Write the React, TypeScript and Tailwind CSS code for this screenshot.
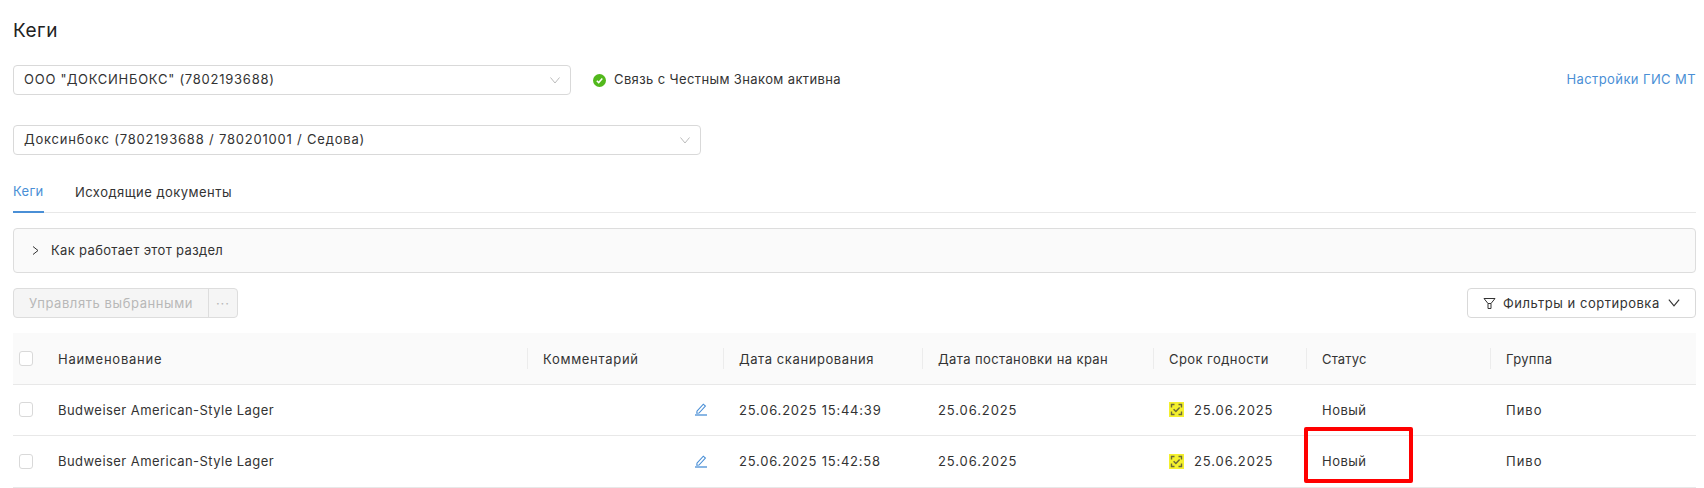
import React from 'react'

const columns = [
  { label: 'Наименование', width: 'w-[483px]', tracking: 'tracking-[0.74px]' },
  { label: 'Комментарий', width: 'w-[196px]', tracking: 'tracking-[0.7px]' },
  { label: 'Дата сканирования', width: 'w-[199px]', tracking: 'tracking-[0.58px]' },
  { label: 'Дата постановки на кран', width: 'w-[231px]', tracking: 'tracking-[0.39px]' },
  { label: 'Срок годности', width: 'w-[153px]', tracking: 'tracking-[0.43px]' },
  { label: 'Статус', width: 'w-[184px]', tracking: 'tracking-[0.15px]' },
  { label: 'Группа', width: 'w-[206px]', tracking: 'tracking-[0.35px]' },
]

const rows = [{ scanned: '25.06.2025 15:44:39' }, { scanned: '25.06.2025 15:42:58' }]

const Chevron = ({ className }: { className?: string }) => (
  <svg viewBox="0 0 10 7" fill="none" stroke="currentColor" strokeWidth="1" className={className}>
    <path d="M0.5 0.5 L5 6 L9.5 0.5" />
  </svg>
)

const Checkbox = () => <span className="block h-[15px] w-[14px] rounded-[3px] border border-[#d9d9d9] bg-white" />

const PencilIcon = () => (
  <svg viewBox="0 0 14 14" fill="none" stroke="#4a8fd6" strokeWidth="1.1" className="-mt-[3px] h-[14px] w-[14px]">
    <path d="M3 9.2 L9.3 2.2 L11.4 4.1 L5 11 L2.8 11.2 Z" />
    <path d="M1 13 H13" strokeWidth="1.3" />
  </svg>
)

const MarkIcon = () => (
  <svg viewBox="0 0 15 15" fill="none" className="-mt-[2px] h-[15px] w-[15px] shrink-0">
    <rect width="15" height="15" fill="#f4f02e" />
    <path d="M2.5 5.5 V2.5 H5.5 M9.5 2.5 H12.5 V5.5 M12.5 9.5 V12.5 H9.5 M5.5 12.5 H2.5 V9.5" stroke="#6a6a3a" strokeWidth="1.4" />
    <path d="M4.6 7.3 L6.9 9.5 L10.6 5.6" stroke="#6a6a3a" strokeWidth="1.5" />
  </svg>
)

export default function App() {
  return (
    <div className="relative h-[488px] w-[1704px] overflow-hidden bg-white pl-[13px] pr-[8px] font-['Inter',sans-serif] text-[13px] text-[#333]">
      <h1 className="flex h-[65px] items-center pb-[4px] text-[19px] font-normal leading-none tracking-[0.5px] text-[#222]">Кеги</h1>

      <div className="flex items-center">
        <div className="flex h-[30px] w-[558px] items-center justify-between rounded-[4px] border border-[#d9d9d9] pl-[10px] pr-[10px] tracking-[0.75px]">
          <span>ООО "ДОКСИНБОКС" (7802193688)</span>
          <Chevron className="h-[7px] w-[10px] text-[#bbb]" />
        </div>
        <svg viewBox="0 0 13 13" className="ml-[22px] h-[13px] w-[13px]">
          <circle cx="6.5" cy="6.5" r="6.5" fill="#52b81c" />
          <path d="M3.8 6.7 L5.7 8.6 L9.3 4.6" fill="none" stroke="#fff" strokeWidth="1.5" />
        </svg>
        <span className="ml-[8px] tracking-[0.38px]">Связь с Честным Знаком активна</span>
        <a className="ml-auto tracking-[0.4px] text-[#4a8fd6]">Настройки ГИС МТ</a>
      </div>

      <div className="mt-[30px] flex h-[30px] w-[688px] items-center justify-between rounded-[4px] border border-[#d9d9d9] pl-[10px] pr-[10px] tracking-[0.8px]">
        <span>Доксинбокс (7802193688 / 780201001 / Седова)</span>
        <Chevron className="h-[7px] w-[10px] text-[#bbb]" />
      </div>

      <div className="mt-[20px] flex h-[38px] border-b border-[#e8e8e8]">
        <div className="flex h-[38px] w-[31px] items-center justify-start border-b-2 border-[#4a8fd6] pb-[3px] tracking-[0.3px] text-[#4a8fd6]">Кеги</div>
        <div className="ml-[31px] flex h-[37px] items-center pb-[2px] tracking-[0.47px]">Исходящие документы</div>
      </div>

      <div className="mt-[15px] flex h-[45px] items-center rounded-[4px] border border-[#ddd] bg-[#fafafa] pl-[18px]">
        <svg viewBox="0 0 7 9" fill="none" stroke="#333" strokeWidth="1" className="h-[9px] w-[7px]">
          <path d="M1 0.5 L6 4.5 L1 8.5" />
        </svg>
        <span className="ml-[12px] tracking-[0.34px]">Как работает этот раздел</span>
      </div>

      <div className="mt-[15px] flex h-[30px] items-stretch justify-between">
        <div className="flex w-[225px] rounded-[4px] border border-[#ddd] bg-[#f5f5f5] text-[#b8b8b8]">
          <div className="flex w-[194px] items-center justify-center pt-[2px] tracking-[0.58px]">Управлять выбранными</div>
          <div className="flex flex-1 items-center justify-center border-l border-[#ddd] text-[13px] leading-none tracking-[1px]">···</div>
        </div>
        <div className="flex w-[229px] items-center rounded-[4px] border border-[#d9d9d9] pl-[15px]">
          <svg viewBox="0 0 13 13" fill="none" stroke="#333" strokeWidth="1" className="h-[13px] w-[13px]">
            <path d="M1 1.5 H12 L8 6.5 H5 Z M5 6.5 V11.5 H8 V6.5" />
          </svg>
          <span className="ml-[7px] pt-[2px] tracking-[0.52px]">Фильтры и сортировка</span>
          <Chevron className="ml-[8px] h-[8px] w-[12px] text-[#333]" />
        </div>
      </div>

      <div className="mt-[15px]">
        <div className="flex h-[52px] items-center border-b border-[#e8e8e8] bg-[#fafafa]">
          <div className="flex w-[31px] justify-center pl-[1px] pr-[7px]"><Checkbox /></div>
          {columns.map((col, i) => (
            <div
              key={col.label}
              className={`flex h-[21px] items-center pt-[2px] ${col.tracking} ${col.width} ${i === 0 ? 'pl-[14px]' : 'border-l border-[#ececec] pl-[15px]'}`}
            >
              {col.label}
            </div>
          ))}
        </div>
        {rows.map((row) => (
          <div key={row.scanned} className="flex h-[51px] items-center border-b border-[#e8e8e8] pt-[1px] last:h-[52px]">
            <div className="-mt-[2px] flex w-[31px] justify-center pl-[1px] pr-[7px]"><Checkbox /></div>
            <div className="w-[484px] pl-[14px] tracking-[0.45px]">Budweiser American-Style Lager</div>
            <div className="flex w-[196px] justify-end pr-[16px]"><PencilIcon /></div>
            <div className="w-[198px] pl-[15px] tracking-[0.78px]">{row.scanned}</div>
            <div className="w-[232px] pl-[16px] tracking-[0.9px]">25.06.2025</div>
            <div className="flex w-[152px] items-center pl-[15px] tracking-[0.9px]">
              <MarkIcon />
              <span className="ml-[10px]">25.06.2025</span>
            </div>
            <div className="w-[185px] pl-[16px] tracking-[0.5px]">Новый</div>
            <div className="w-[205px] pl-[15px] tracking-[1px]">Пиво</div>
          </div>
        ))}
      </div>

      <div className="absolute left-[1304px] top-[427px] h-[56px] w-[109px] rounded-[2px] border-4 border-[#ff0000]" />
    </div>
  )
}
